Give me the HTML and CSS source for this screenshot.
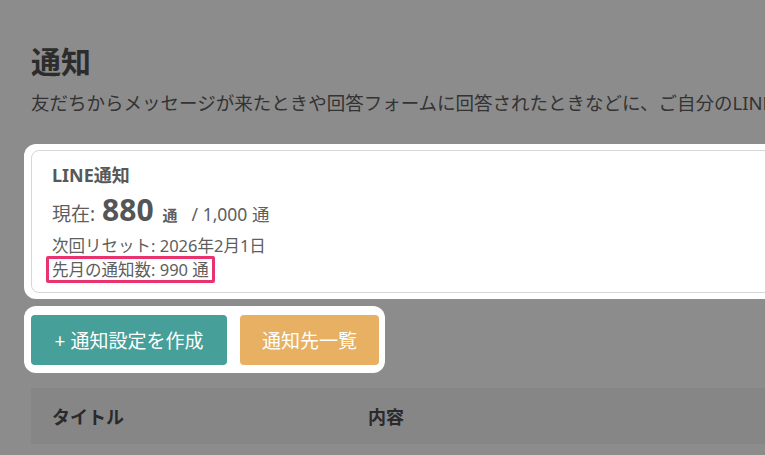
FILE: index.html
```html
<!DOCTYPE html>
<html lang="ja">
<head>
<meta charset="utf-8">
<link rel="stylesheet" href="styles.css">
</head>
<body>
<div class="page">
  <h1 class="title">通知</h1>
  <p class="lead">友だちからメッセージが来たときや回答フォームに回答されたときなどに、ご自分のLINEに通知を送ることができます。</p>

  <div class="spot spot-card">
    <div class="card">
      <div class="card-label">LINE通知</div>
      <div class="now">
        <span class="now-label">現在:</span>
        <span class="now-num">880</span>
        <span class="now-unit">通</span>
        <span class="now-max">/ 1,000 通</span>
      </div>
      <div class="meta">次回リセット: 2026年2月1日</div>
      <div class="meta last"><span class="mark">先月の通知数: 990 通</span></div>
    </div>
  </div>

  <div class="spot spot-btns">
    <button class="btn btn-teal">+ 通知設定を作成</button>
    <button class="btn btn-orange">通知先一覧</button>
  </div>

  <div class="thead">
    <div class="th th-title">タイトル</div>
    <div class="th">内容</div>
  </div>
</div>
</body>
</html>
```

FILE: styles.css
```css
html, body {
  margin: 0;
  padding: 0;
  background: #8c8c8c;
  overflow: hidden;
}
body {
  width: 765px;
  height: 455px;
  font-family: "Noto Sans", "Noto Sans CJK JP", sans-serif;
}
.page {
  padding: 44px 0 0 31px;
  width: 734px;
  overflow: hidden;
}
.title {
  margin: 0;
  font-size: 30px;
  line-height: 36px;
  font-weight: 700;
  color: #2c2c2c;
}
.lead {
  margin: 10px 0 0;
  font-size: 18.5px;
  line-height: 26px;
  color: #333;
  white-space: nowrap;
  overflow: hidden;
}
.spot {
  background: #fff;
  border-radius: 12px;
}
.spot-card {
  margin: 28px 0 0 -7px;
  padding: 6px 0 6px 7px;
  width: 880px;
}
.card {
  border: 1px solid #d6d6d6;
  border-radius: 8px;
  height: 141px;
  padding: 0 20px;
  box-sizing: content-box;
  color: #5e5e5e;
}
.card-label {
  padding-top: 11px;
  font-size: 18px;
  line-height: 26px;
  font-weight: 700;
  color: #585858;
}
.now {
  margin-top: 1px;
  display: flex;
  align-items: baseline;
  height: 40px;
}
.now-label {
  font-size: 19px;
}
.now-num {
  font-size: 30px;
  font-weight: 700;
  margin-left: 7px;
  color: #555;
}
.now-unit {
  font-size: 15px;
  font-weight: 700;
  margin-left: 9px;
}
.now-max {
  font-size: 17.5px;
  margin-left: 14px;
}
.meta {
  font-size: 16.5px;
  line-height: 24px;
  margin-top: 5px;
}
.meta.last {
  margin-top: -2px;
}
.mark {
  display: inline-block;
  margin-left: -6px;
  padding: 0 3px 0 3px;
  border: 3px solid #e8336f;
  border-radius: 2px;
  line-height: 21px;
}
.spot-btns {
  margin: 7px 0 0 -7px;
  padding: 9px 6px 8px 7px;
  width: fit-content;
  display: flex;
  gap: 13px;
}
.btn {
  border: 0;
  height: 50px;
  border-radius: 4px;
  color: #fff;
  font-family: "Noto Sans", "Noto Sans CJK JP", sans-serif;
  font-size: 19px;
  padding: 0;
}
.btn-teal {
  width: 196px;
  background: #469f98;
}
.btn-orange {
  width: 139px;
  background: #e7b063;
}
.thead {
  margin-top: 15px;
  height: 56px;
  background: #868686;
  display: flex;
  align-items: center;
  font-size: 18px;
  font-weight: 700;
  color: #2a2a2a;
}
.th-title {
  padding-left: 21px;
  width: 316px;
}
```
